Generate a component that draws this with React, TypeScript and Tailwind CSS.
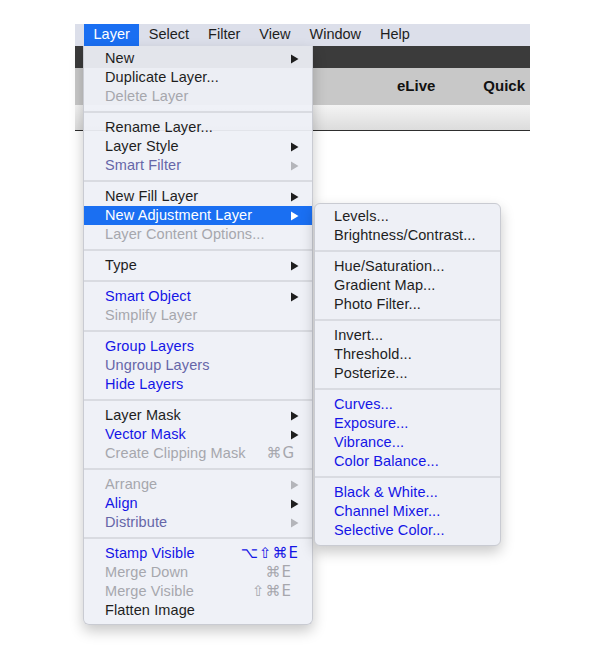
import React from "react";

type Tone = "normal" | "disabled" | "blue" | "muted";

interface Item {
  label: string;
  tone?: Tone;
  arrow?: boolean;
  shortcut?: string;
  shortcutPad?: string;
  active?: boolean;
}

const layerMenu: Item[][] = [
  [
    { label: "New", arrow: true },
    { label: "Duplicate Layer..." },
    { label: "Delete Layer", tone: "disabled" },
  ],
  [
    { label: "Rename Layer..." },
    { label: "Layer Style", arrow: true },
    { label: "Smart Filter", tone: "muted", arrow: true },
  ],
  [
    { label: "New Fill Layer", arrow: true },
    { label: "New Adjustment Layer", arrow: true, active: true },
    { label: "Layer Content Options...", tone: "disabled" },
  ],
  [{ label: "Type", arrow: true }],
  [
    { label: "Smart Object", tone: "blue", arrow: true },
    { label: "Simplify Layer", tone: "disabled" },
  ],
  [
    { label: "Group Layers", tone: "blue" },
    { label: "Ungroup Layers", tone: "muted" },
    { label: "Hide Layers", tone: "blue" },
  ],
  [
    { label: "Layer Mask", arrow: true },
    { label: "Vector Mask", tone: "blue", arrow: true },
    { label: "Create Clipping Mask", tone: "disabled", shortcut: "⌘G", shortcutPad: "pr-[4px]" },
  ],
  [
    { label: "Arrange", tone: "disabled", arrow: true },
    { label: "Align", tone: "blue", arrow: true },
    { label: "Distribute", tone: "muted", arrow: true },
  ],
  [
    { label: "Stamp Visible", tone: "blue", shortcut: "⌥⇧⌘E", shortcutPad: "pr-0" },
    { label: "Merge Down", tone: "disabled", shortcut: "⌘E", shortcutPad: "pr-[7px]" },
    { label: "Merge Visible", tone: "disabled", shortcut: "⇧⌘E", shortcutPad: "pr-[7px]" },
    { label: "Flatten Image" },
  ],
];

const adjustMenu: Item[][] = [
  [{ label: "Levels..." }, { label: "Brightness/Contrast..." }],
  [{ label: "Hue/Saturation..." }, { label: "Gradient Map..." }, { label: "Photo Filter..." }],
  [{ label: "Invert..." }, { label: "Threshold..." }, { label: "Posterize..." }],
  [
    { label: "Curves...", tone: "blue" },
    { label: "Exposure...", tone: "blue" },
    { label: "Vibrance...", tone: "blue" },
    { label: "Color Balance...", tone: "blue" },
  ],
  [
    { label: "Black & White...", tone: "blue" },
    { label: "Channel Mixer...", tone: "blue" },
    { label: "Selective Color...", tone: "blue" },
  ],
];

const toneClass: Record<Tone, string> = {
  normal: "text-[#1e1e1e]",
  disabled: "text-[#a6a7ad]",
  blue: "text-[#1515e6]",
  muted: "text-[#6666a8]",
};

function Arrow({ color }: { color: string }) {
  return (
    <svg width="8" height="10" viewBox="0 0 8 10">
      <polygon points="0,0.5 7.5,5 0,9.5" fill={color} />
    </svg>
  );
}

function MenuRow({ item, padLeft }: { item: Item; padLeft: string }) {
  const tone = item.tone ?? "normal";
  const color = item.active ? "text-white" : toneClass[tone];
  const arrowColor = item.active ? "#ffffff" : tone === "normal" || tone === "blue" ? "#1e1e1e" : "#b4b5ba";

  return (
    <div
      className={`h-[19px] flex items-center justify-between ${padLeft} pr-[13px] ${
        item.active ? "bg-[#1a6ff2]" : ""
      }`}
    >
      <span className={`${color} leading-none whitespace-nowrap tracking-[0.1px]`}>{item.label}</span>
      {item.arrow && <Arrow color={arrowColor} />}
      {item.shortcut && (
        <span
          className={`${color} ${item.shortcutPad} leading-none tracking-[1px] font-['DejaVu_Sans',sans-serif] text-[15px]`}
        >
          {item.shortcut}
        </span>
      )}
    </div>
  );
}

function MenuGroups({ groups, padLeft }: { groups: Item[][]; padLeft: string }) {
  return (
    <>
      {groups.map((group, gi) => (
        <div key={gi}>
          {gi > 0 && (
            <div className="h-[12px] flex items-center">
              <div className="h-[2px] w-full bg-[#d9dbe1]" />
            </div>
          )}
          {group.map((item) => (
            <MenuRow key={item.label} item={item} padLeft={padLeft} />
          ))}
        </div>
      ))}
    </>
  );
}

export default function App() {
  const topItems = ["Layer", "Select", "Filter", "View", "Window", "Help"];

  return (
    <div className="relative w-[600px] h-[650px] bg-white overflow-hidden font-['Liberation_Sans',Arial,sans-serif] text-[14.5px]">
      <div className="ml-[75px] mt-[24px] w-[455px] flex flex-col">
        {/* menu bar */}
        <div className="h-[22px] bg-[#dcdfea] flex items-stretch pl-[9px]">
          {topItems.map((t, i) => (
            <div
              key={t}
              className={`px-[9.5px] flex items-center ${
                i === 0 ? "bg-[#1a6ff2] text-white" : "text-[#1e1e1e]"
              }`}
            >
              {t}
            </div>
          ))}
        </div>
        {/* app chrome behind the menu */}
        <div className="h-[22px] bg-[#3b3b3b]" />
        <div className="h-[37px] bg-[#c8c8c8] flex items-center justify-end gap-[48px] pr-[5px] text-[15px] font-bold text-[#111]">
          <span>eLive</span>
          <span>Quick</span>
        </div>
        <div className="h-[26px] bg-gradient-to-b from-[#f4f4f4] to-[#dcdcdc] border-b border-[#2e2e2e]" />
      </div>

      {/* Layer menu */}
      <div className="absolute left-[83px] top-[46px] w-[230px] pt-[3px] pb-[4px] bg-[#eef0f6]/[0.94] rounded-b-[6px] border-x border-b border-[#c9cbd2] shadow-[0_6px_14px_rgba(0,0,0,0.22)]">
        <MenuGroups groups={layerMenu} padLeft="pl-[21px]" />
      </div>

      {/* Adjustment submenu */}
      <div className="absolute left-[314px] top-[203px] w-[187px] pt-[3px] pb-[5px] bg-[#eef0f6] rounded-[6px] border border-[#c9cbd2] shadow-[0_6px_14px_rgba(0,0,0,0.22)]">
        <MenuGroups groups={adjustMenu} padLeft="pl-[19px]" />
      </div>
    </div>
  );
}
